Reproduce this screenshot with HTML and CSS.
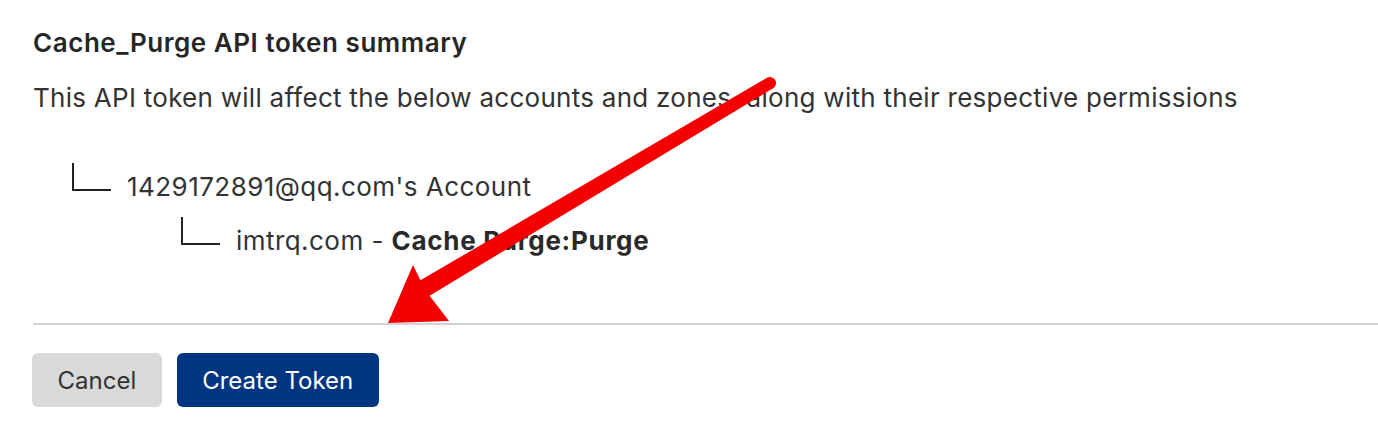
FILE: index.html
```html
<!DOCTYPE html>
<html lang="en">
<head>
    <meta charset="UTF-8">
    <title>Cache_Purge API token summary</title>
    <link rel="stylesheet" href="styles.css">
</head>
<body>
    <div class="summary">
        <h2 class="title">Cache_Purge API token summary</h2>
        <p class="desc">This API token will affect the below accounts and zones, along with their respective permissions</p>

        <div class="tree">
            <div class="row account">
                <span class="branch"></span>
                <span>1429172891@qq.com's Account</span>
            </div>
            <div class="row zone">
                <span class="branch"></span>
                <span>imtrq.com - <b>Cache Purge:Purge</b></span>
            </div>
        </div>
    </div>

    <div class="actions">
        <button class="btn cancel">Cancel</button>
        <button class="btn create">Create Token</button>
    </div>

    <!-- red annotation arrow drawn over the page -->
    <svg class="arrow" width="1378" height="424" viewBox="0 0 1378 424">
        <path d="M766.9 77.8 L420.4 280.3 L413 265 L388 323 L449 321 L429.6 295.7 L773.1 88.2 A6 6 0 0 0 766.9 77.8 Z" fill="#f40000"/>
    </svg>
</body>
</html>
```

FILE: styles.css
```css
body {
    margin: 0;
    background: #fff;
    font-family: Inter, "Noto Sans", sans-serif;
    color: #333;
    position: relative;
    height: 424px;
    overflow: hidden;
}
.summary {
    padding: 28px 0 0 33px;
}
.title {
    margin: 0;
    font-size: 26px;
    line-height: 30px;
    font-weight: 600;
    letter-spacing: 0.55px;
    color: #262626;
}
.desc {
    margin: 25px 0 0;
    font-size: 26px;
    line-height: 30px;
    letter-spacing: 0.27px;
}
.tree {
    margin-top: 59px;
    font-size: 26px;
    line-height: 30px;
    letter-spacing: 0.45px;
}
.row {
    display: flex;
    align-items: flex-start;
    height: 30px;
}
.row + .row {
    margin-top: 24px;
}
.account {
    padding-left: 39px;
}
.zone {
    padding-left: 148px;
}
.branch {
    width: 37px;
    height: 26px;
    margin-top: -9px;
    margin-right: 16px;
    border-left: 2px solid #222;
    border-bottom: 2px solid #222;
}
.row b {
    font-weight: 700;
    color: #2a2a2a;
    letter-spacing: 0.7px;
}
.actions {
    margin: 67px 0 0 33px;
    padding-top: 28px;
    border-top: 2px solid #d4d4d4;
    display: flex;
    gap: 16px;
}
.btn {
    height: 54px;
    border: none;
    border-radius: 6px;
    font-family: Inter, "Noto Sans", sans-serif;
    font-size: 24px;
    padding: 0 25.5px;
    margin-left: -1px;
}
.cancel {
    background: #d9d9d9;
    color: #333;
}
.create {
    background: #003681;
    color: #fff;
}
.arrow {
    position: absolute;
    top: 0;
    left: 0;
}
```
